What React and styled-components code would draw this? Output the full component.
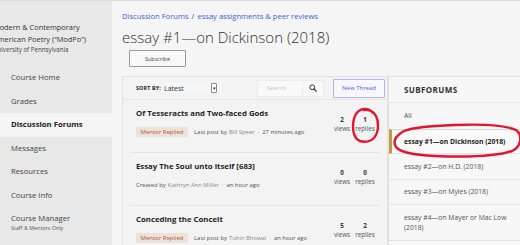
import React from "react";
import styled, { createGlobalStyle } from "styled-components";

const Global = createGlobalStyle`
  html, body { margin: 0; padding: 0; background: #f5f5f5; }
  body { font-family: "Open Sans", "Liberation Sans", sans-serif; color: #333; }
`;

const Page = styled.div`
  position: relative;
  display: flex;
  width: 520px;
  height: 245px;
  overflow: hidden;
  border-top: 1px solid #dcdcdc;
  box-sizing: border-box;
`;

const Sidebar = styled.nav`
  flex: 0 0 112px;
  background: #e8e8e8;
  overflow: hidden;
  padding-top: 20px;
`;

const CourseName = styled.div`
  margin-left: -7px;
  font-size: 7.4px;
  line-height: 12px;
  color: #333;
  white-space: nowrap;
`;

const School = styled.div`
  margin-left: -7px;
  font-size: 6.2px;
  line-height: 10px;
  color: #444;
  white-space: nowrap;
`;

const NavList = styled.ul`
  list-style: none;
  margin: 11px 0 0;
  padding: 0;
`;

const NavItem = styled.li`
  padding: 6px 11px;
  font-size: 7.7px;
  line-height: 11.5px;
  font-weight: ${({ active }) => (active ? 700 : 400)};
  color: ${({ active }) => (active ? "#222" : "#444")};
  background: ${({ active }) => (active ? "#f5f5f5" : "transparent")};
  white-space: nowrap;
`;

const NavSub = styled.div`
  font-size: 5.4px;
  line-height: 7px;
  color: #555;
`;

const Main = styled.main`
  flex: 1;
  min-width: 0;
  padding: 9px 0 0 10px;
  display: flex;
  flex-direction: column;

  & > * {
    flex-shrink: 0;
  }
`;

const Crumbs = styled.div`
  font-size: 7.6px;
  line-height: 12px;
  color: #3f5fd6;
  white-space: nowrap;
`;

const Sep = styled.span`
  color: #444;
  margin: 0 3px;
`;

const Title = styled.h1`
  margin: 4px 0 0;
  font-size: 15px;
  line-height: 22px;
  font-weight: 300;
  color: #333;
  white-space: nowrap;
`;

const SubscribeBtn = styled.button`
  align-self: flex-start;
  margin: 2px 0 0 7px;
  width: 57px;
  height: 17px;
  border: 1px solid #9a9a9a;
  border-radius: 1px;
  background: #f8f8f8;
  font-family: inherit;
  font-size: 5.5px;
  color: #444;
  padding: 0;
`;

const Panels = styled.div`
  display: flex;
  margin-top: 9px;
`;

const Threads = styled.section`
  flex: 0 0 266px;
  border: 1px solid #e2e2e2;
  border-bottom: none;
  background: #f3f3f3;
  box-sizing: border-box;
`;

const Toolbar = styled.div`
  display: flex;
  align-items: center;
  height: 22px;
  padding: 0 2px 0 13px;
  border-bottom: 1px solid #e6e6e6;
`;

const SortLabel = styled.span`
  font-size: 5.3px;
  font-weight: 700;
  letter-spacing: 0.2px;
  color: #222;
  margin-right: 3px;
`;

const SortSelect = styled.div`
  display: flex;
  align-items: center;
  justify-content: space-between;
  width: 53px;
  height: 12px;
  font-size: 7px;
  color: #333;
  background: #f6f6f6;
`;

const SelectArrow = styled.span`
  width: 6px;
  height: 10px;
  border: 1px solid #888;
  border-radius: 1px;
  background: #fff;
  box-sizing: border-box;
  font-size: 5px;
  line-height: 8px;
  text-align: center;
  color: #222;
`;

const SearchBox = styled.div`
  display: flex;
  align-items: center;
  margin-left: 40px;
  width: 67px;
  height: 17px;
  background: #f9f9f9;
  border: 1px solid #ececec;
  box-sizing: border-box;
`;

const SearchText = styled.span`
  flex: 1;
  font-size: 6px;
  color: #c4c4c4;
  padding-left: 9px;
`;

const SearchIcon = styled.span`
  display: flex;
  align-items: center;
  justify-content: center;
  width: 20px;
  height: 100%;
  border-left: 1px solid #ececec;
`;

const NewThreadBtn = styled.button`
  margin-left: auto;
  width: 52px;
  height: 19px;
  border: 1px solid #b3b7ee;
  border-radius: 1px;
  background: #f8f8fc;
  color: #4a66d8;
  font-family: inherit;
  font-size: 6px;
  padding: 0;
`;

const Row = styled.div`
  display: flex;
  align-items: flex-start;
  box-sizing: border-box;
  height: 53px;
  margin: 0 8px 0 7px;
  padding: 6px 3px 0 6px;
  border-bottom: 1px solid #e3e3e3;
`;

const RowBody = styled.div`
  flex: 1;
  min-width: 0;
`;

const ThreadTitle = styled.div`
  font-size: 7.8px;
  line-height: 14px;
  font-weight: 700;
  color: #1f1f1f;
  white-space: nowrap;
`;

const Meta = styled.div`
  display: flex;
  align-items: center;
  margin-top: 6px;
  height: 12px;
  font-size: 5.9px;
  color: #555;
  white-space: nowrap;
`;

const Badge = styled.span`
  display: inline-flex;
  align-items: center;
  height: 10px;
  padding: 0 4.5px;
  margin-right: 6px;
  background: #ece3d8;
  color: #b1543a;
  font-size: 6px;
`;

const Person = styled.span`
  color: #8a8a8a;
  margin-left: 2px;
`;

const Dot = styled.span`
  margin: 0 3px;
  color: #999;
`;

const Stats = styled.div`
  display: flex;
  gap: 1px;
  margin-top: 10px;
`;

const Stat = styled.div`
  width: 22px;
  text-align: center;
  font-size: 6.3px;
  line-height: 8.5px;
  color: #555;
`;

const StatNum = styled.div`
  font-weight: 700;
  color: #333;
`;

const Subforums = styled.aside`
  flex: 0 0 150px;
  background: #f7f7f7;
  border-top: 1px solid #e2e2e2;
  border-left: 1px solid #e2e2e2;
`;

const SubHeader = styled.div`
  height: 25px;
  padding-left: 15px;
  display: flex;
  align-items: center;
  font-size: 8px;
  font-weight: 700;
  letter-spacing: 0.4px;
  color: #333;
  border-bottom: 1px solid #e6e6e6;
`;

const SubItem = styled.div`
  display: flex;
  align-items: center;
  box-sizing: border-box;
  height: ${({ h }) => h}px;
  padding: 0 14px 0 ${({ active }) => (active ? "12px" : "15px")};
  font-size: 6.8px;
  line-height: 10px;
  font-weight: ${({ active }) => (active ? 700 : 400)};
  color: ${({ active }) => (active ? "#222" : "#555")};
  background: ${({ active }) => (active ? "#fafafa" : "transparent")};
  border-bottom: 1px solid ${({ plain }) => (plain ? "transparent" : "#e4e4e4")};
  border-left: ${({ active }) => (active ? "3px solid #c59a3c" : "none")};
  border-top: ${({ active }) => (active ? "1px solid #d6d6d6" : "none")};
`;

const Ink = styled.svg`
  position: absolute;
  left: 0;
  top: 0;
  pointer-events: none;
`;

const threads = [
  {
    title: "Of Tesseracts and Two-faced Gods",
    badge: true,
    lead: "Last post by",
    who: "Bill Speer",
    when: "27 minutes ago",
    views: 2,
    replies: 1,
  },
  {
    title: "Essay The Soul unto itself [683]",
    badge: false,
    lead: "Created by",
    who: "Kathryn Ann Miller",
    when: "an hour ago",
    views: 0,
    replies: 0,
  },
  {
    title: "Conceding the Conceit",
    badge: true,
    lead: "Last post by",
    who: "Tuhin Bhowal",
    when: "an hour ago",
    views: 5,
    replies: 2,
  },
];

const SearchGlyph = () => (
  <svg width="8" height="8" viewBox="0 0 16 16">
    <circle cx="6.5" cy="6.5" r="4.8" fill="none" stroke="#333" strokeWidth="2" />
    <path d="M10 10l4.5 4.5" stroke="#333" strokeWidth="2.2" strokeLinecap="round" />
  </svg>
);

export default function App() {
  return (
    <>
      <Global />
      <Page>
        <Sidebar>
          <CourseName>Modern &amp; Contemporary</CourseName>
          <CourseName>American Poetry (“ModPo”)</CourseName>
          <School>University of Pennsylvania</School>
          <NavList>
            <NavItem>Course Home</NavItem>
            <NavItem>Grades</NavItem>
            <NavItem active>Discussion Forums</NavItem>
            <NavItem>Messages</NavItem>
            <NavItem>Resources</NavItem>
            <NavItem>Course Info</NavItem>
            <NavItem>
              Course Manager
              <NavSub>Staff &amp; Mentors Only</NavSub>
            </NavItem>
          </NavList>
        </Sidebar>

        <Main>
          <Crumbs>
            Discussion Forums<Sep>/</Sep>essay assignments &amp; peer reviews
          </Crumbs>
          <Title>essay #1—on Dickinson (2018)</Title>
          <SubscribeBtn>Subscribe</SubscribeBtn>

          <Panels>
            <Threads>
              <Toolbar>
                <SortLabel>SORT BY:</SortLabel>
                <SortSelect>
                  Latest
                  <SelectArrow>▾</SelectArrow>
                </SortSelect>
                <SearchBox>
                  <SearchText>Search</SearchText>
                  <SearchIcon>
                    <SearchGlyph />
                  </SearchIcon>
                </SearchBox>
                <NewThreadBtn>New Thread</NewThreadBtn>
              </Toolbar>

              {threads.map((t) => (
                <Row key={t.title}>
                  <RowBody>
                    <ThreadTitle>{t.title}</ThreadTitle>
                    <Meta>
                      {t.badge && <Badge>Mentor Replied</Badge>}
                      {t.lead}
                      <Person>{t.who}</Person>
                      <Dot>·</Dot>
                      {t.when}
                    </Meta>
                  </RowBody>
                  <Stats>
                    <Stat>
                      <StatNum>{t.views}</StatNum>
                      views
                    </Stat>
                    <Stat>
                      <StatNum>{t.replies}</StatNum>
                      replies
                    </Stat>
                  </Stats>
                </Row>
              ))}
            </Threads>

            <Subforums>
              <SubHeader>SUBFORUMS</SubHeader>
              <SubItem plain h={26}>All</SubItem>
              <SubItem active h={25}>essay #1—on Dickinson (2018)</SubItem>
              <SubItem h={26}>essay #2—on H.D. (2018)</SubItem>
              <SubItem h={25}>essay #3—on Myles (2018)</SubItem>
              <SubItem h={36}>essay #4—on Mayer or Mac Low (2018)</SubItem>
            </Subforums>
          </Panels>
        </Main>

        <Ink width="520" height="245" viewBox="0 0 520 245">
          <path
            d="M371 110 C366 106 359 108 356 113 C352 120 352 131 356 137 C360 142 369 142 374 137 C379 131 379 121 376 115 C374 111 369 108 364 109"
            fill="none"
            stroke="#e5132f"
            strokeWidth="2.4"
            strokeLinecap="round"
          />
          <path
            d="M402 131 C412 126 432 125 455 124 C480 123 505 124 516 129 C523 134 521 146 512 150 C495 156 460 156 435 155 C415 154 400 152 396 146 C393 141 395 136 401 132"
            fill="none"
            stroke="#e5132f"
            strokeWidth="2.4"
            strokeLinecap="round"
          />
        </Ink>
      </Page>
    </>
  );
}
